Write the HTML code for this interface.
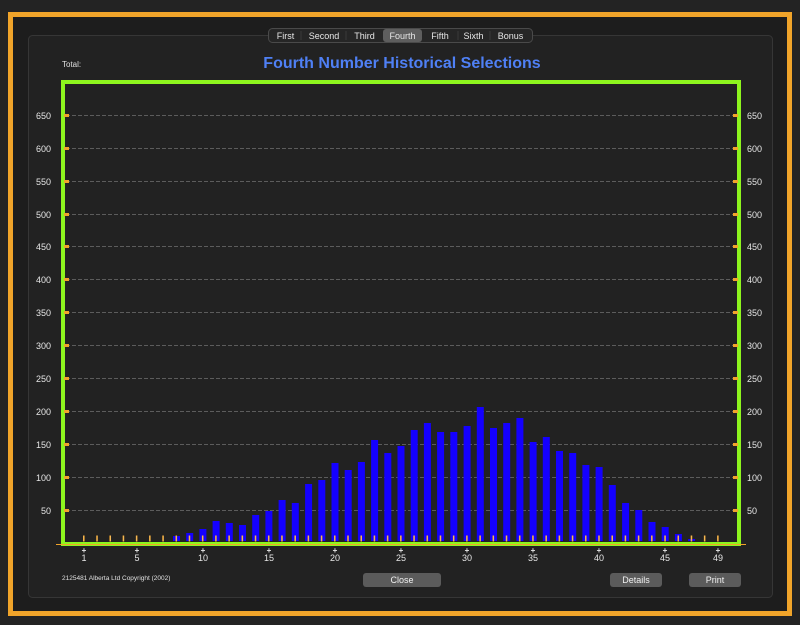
<!DOCTYPE html>
<html><head><meta charset="utf-8"><style>
html,body{margin:0;padding:0;background:#232323;width:800px;height:625px;overflow:hidden;font-family:"Liberation Sans",sans-serif}
svg{position:absolute;left:0;top:0}
</style></head><body>
<svg width="800" height="625" viewBox="0 0 800 625" font-family="Liberation Sans, sans-serif">
<rect x="0" y="0" width="800" height="625" fill="#232323"/>
<rect x="10.5" y="14.5" width="779" height="599" fill="#1d1d1d" stroke="#f0a42a" stroke-width="5"/>
<rect x="28.5" y="35.5" width="744" height="562" rx="4" fill="#222" stroke="#363636"/>
<rect x="268.5" y="28.5" width="264" height="14" rx="4" fill="#262626" stroke="#4a4a4a"/>
<rect x="383" y="29" width="39" height="13" rx="3" fill="#5e5e5e"/>
<g font-size="9" fill="#e6e6e6" text-anchor="middle">
<text x="285.5" y="38.8">First</text><text x="324" y="38.8">Second</text><text x="364.5" y="38.8">Third</text><text x="402.5" y="38.8">Fourth</text><text x="440" y="38.8">Fifth</text><text x="473.5" y="38.8">Sixth</text><text x="510.5" y="38.8">Bonus</text>
</g>
<g stroke="#3a3a3a"><line x1="301" y1="31" x2="301" y2="40"/><line x1="346" y1="31" x2="346" y2="40"/><line x1="458" y1="31" x2="458" y2="40"/><line x1="490" y1="31" x2="490" y2="40"/></g>
<text x="62" y="67" font-size="8" fill="#e0e0e0">Total:</text>
<text x="402" y="68" font-size="16" font-weight="bold" fill="#4f80f5" text-anchor="middle">Fourth Number Historical Selections</text>
<g stroke="#5c5c5c" stroke-dasharray="4 2" stroke-width="1">
<line x1="66" x2="736" y1="510.5" y2="510.5"/><line x1="66" x2="736" y1="477.5" y2="477.5"/><line x1="66" x2="736" y1="444.5" y2="444.5"/><line x1="66" x2="736" y1="411.5" y2="411.5"/><line x1="66" x2="736" y1="378.5" y2="378.5"/><line x1="66" x2="736" y1="345.5" y2="345.5"/><line x1="66" x2="736" y1="312.5" y2="312.5"/><line x1="66" x2="736" y1="279.5" y2="279.5"/><line x1="66" x2="736" y1="246.5" y2="246.5"/><line x1="66" x2="736" y1="214.5" y2="214.5"/><line x1="66" x2="736" y1="181.5" y2="181.5"/><line x1="66" x2="736" y1="148.5" y2="148.5"/><line x1="66" x2="736" y1="115.5" y2="115.5"/>
</g>
<g font-size="9" fill="#e6e6e6">
<g text-anchor="end">
<text x="51" y="514">50</text><text x="51" y="481">100</text><text x="51" y="448">150</text><text x="51" y="415">200</text><text x="51" y="382">250</text><text x="51" y="349">300</text><text x="51" y="316">350</text><text x="51" y="283">400</text><text x="51" y="250">450</text><text x="51" y="218">500</text><text x="51" y="185">550</text><text x="51" y="152">600</text><text x="51" y="119">650</text>
</g>
<text x="747" y="514">50</text><text x="747" y="481">100</text><text x="747" y="448">150</text><text x="747" y="415">200</text><text x="747" y="382">250</text><text x="747" y="349">300</text><text x="747" y="316">350</text><text x="747" y="283">400</text><text x="747" y="250">450</text><text x="747" y="218">500</text><text x="747" y="185">550</text><text x="747" y="152">600</text><text x="747" y="119">650</text>
</g>
<g fill="#1400ff">
<rect x="173" y="536" width="7" height="5"/><rect x="186.2" y="533" width="7" height="8"/><rect x="199.4" y="529" width="7" height="12"/><rect x="212.6" y="521" width="7" height="20"/><rect x="225.8" y="523" width="7" height="18"/><rect x="239" y="525" width="7" height="16"/><rect x="252.2" y="515" width="7" height="26"/><rect x="265.4" y="511" width="7" height="30"/><rect x="278.6" y="500" width="7" height="41"/><rect x="291.8" y="503" width="7" height="38"/><rect x="305.1" y="484" width="7" height="57"/><rect x="318.3" y="480" width="7" height="61"/><rect x="331.5" y="463" width="7" height="78"/><rect x="344.7" y="470" width="7" height="71"/><rect x="357.9" y="462" width="7" height="79"/><rect x="371.1" y="440" width="7" height="101"/><rect x="384.3" y="453" width="7" height="88"/><rect x="397.5" y="446" width="7" height="95"/><rect x="410.7" y="430" width="7" height="111"/><rect x="423.9" y="423" width="7" height="118"/><rect x="437.1" y="432" width="7" height="109"/><rect x="450.3" y="432" width="7" height="109"/><rect x="463.6" y="426" width="7" height="115"/><rect x="476.8" y="407" width="7" height="134"/><rect x="490" y="428" width="7" height="113"/><rect x="503.2" y="423" width="7" height="118"/><rect x="516.4" y="418" width="7" height="123"/><rect x="529.6" y="442" width="7" height="99"/><rect x="542.8" y="437" width="7" height="104"/><rect x="556" y="451" width="7" height="90"/><rect x="569.2" y="453" width="7" height="88"/><rect x="582.4" y="465" width="7" height="76"/><rect x="595.6" y="467" width="7" height="74"/><rect x="608.8" y="485" width="7" height="56"/><rect x="622.1" y="503" width="7" height="38"/><rect x="635.3" y="510" width="7" height="31"/><rect x="648.5" y="522" width="7" height="19"/><rect x="661.7" y="527" width="7" height="14"/><rect x="674.9" y="534" width="7" height="7"/><rect x="688.1" y="539" width="7" height="2"/>
</g>
<line x1="83" x2="720" y1="538.5" y2="538.5" stroke="#f0a42a" stroke-width="6" stroke-dasharray="1.6 11.61"/>
<line x1="83.6" x2="720" y1="538.5" y2="538.5" stroke="#ffe8c0" stroke-opacity="0.6" stroke-width="6" stroke-dasharray="0.5 12.71"/>
<rect x="63" y="82" width="676" height="462" fill="none" stroke="#8ef51e" stroke-width="4"/>
<line x1="56" x2="746" y1="544.5" y2="544.5" stroke="#f0a42a" stroke-width="1"/>
<g stroke="#f0a42a" stroke-width="3">
<line x1="64" x2="69" y1="510.5" y2="510.5"/><line x1="64" x2="69" y1="477.5" y2="477.5"/><line x1="64" x2="69" y1="444.5" y2="444.5"/><line x1="64" x2="69" y1="411.5" y2="411.5"/><line x1="64" x2="69" y1="378.5" y2="378.5"/><line x1="64" x2="69" y1="345.5" y2="345.5"/><line x1="64" x2="69" y1="312.5" y2="312.5"/><line x1="64" x2="69" y1="279.5" y2="279.5"/><line x1="64" x2="69" y1="246.5" y2="246.5"/><line x1="64" x2="69" y1="214.5" y2="214.5"/><line x1="64" x2="69" y1="181.5" y2="181.5"/><line x1="64" x2="69" y1="148.5" y2="148.5"/><line x1="64" x2="69" y1="115.5" y2="115.5"/>
<line x1="733" x2="738" y1="510.5" y2="510.5"/><line x1="733" x2="738" y1="477.5" y2="477.5"/><line x1="733" x2="738" y1="444.5" y2="444.5"/><line x1="733" x2="738" y1="411.5" y2="411.5"/><line x1="733" x2="738" y1="378.5" y2="378.5"/><line x1="733" x2="738" y1="345.5" y2="345.5"/><line x1="733" x2="738" y1="312.5" y2="312.5"/><line x1="733" x2="738" y1="279.5" y2="279.5"/><line x1="733" x2="738" y1="246.5" y2="246.5"/><line x1="733" x2="738" y1="214.5" y2="214.5"/><line x1="733" x2="738" y1="181.5" y2="181.5"/><line x1="733" x2="738" y1="148.5" y2="148.5"/><line x1="733" x2="738" y1="115.5" y2="115.5"/>
</g>
<g font-size="9" fill="#e6e6e6" text-anchor="middle">
<g font-size="8" font-weight="bold"><text x="84" y="553">+</text><text x="137" y="553">+</text><text x="203" y="553">+</text><text x="269" y="553">+</text><text x="335" y="553">+</text><text x="401" y="553">+</text><text x="467" y="553">+</text><text x="533" y="553">+</text><text x="599" y="553">+</text><text x="665" y="553">+</text><text x="718" y="553">+</text></g>
<text x="84" y="561">1</text><text x="137" y="561">5</text><text x="203" y="561">10</text><text x="269" y="561">15</text><text x="335" y="561">20</text><text x="401" y="561">25</text><text x="467" y="561">30</text><text x="533" y="561">35</text><text x="599" y="561">40</text><text x="665" y="561">45</text><text x="718" y="561">49</text>
</g>
<text x="62" y="580" font-size="6.5" fill="#e0e0e0">2125481 Alberta Ltd Copyright (2002)</text>
<rect x="363" y="573" width="78" height="14" rx="3" fill="#5b5b5b"/>
<rect x="610" y="573" width="52" height="14" rx="3" fill="#5b5b5b"/>
<rect x="689" y="573" width="52" height="14" rx="3" fill="#5b5b5b"/>
<g font-size="9" fill="#f0f0f0" text-anchor="middle"><text x="402" y="583">Close</text><text x="636" y="583">Details</text><text x="715" y="583">Print</text></g>
</svg>
</body></html>
